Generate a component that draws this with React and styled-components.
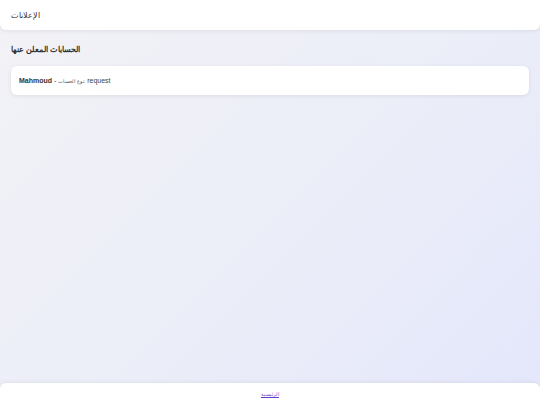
import React from "react";
import styled, { createGlobalStyle } from "styled-components";

const GlobalStyle = createGlobalStyle`
  html, body {
    margin: 0;
    padding: 0;
    height: 100%;
  }
  body {
    font-family: "Liberation Sans", "Noto Sans", Arial, sans-serif;
    background: linear-gradient(135deg, #f2f2f6 0%, #eceef8 50%, #e4e7fb 100%);
    color: #222;
  }
  #root {
    min-height: 100vh;
    display: flex;
    flex-direction: column;
  }
`;

const Header = styled.header`
  height: 30px;
  background: #fff;
  border-radius: 0 0 6px 6px;
  box-shadow: 0 1px 4px rgba(0, 0, 0, 0.08);
  display: flex;
  align-items: center;
  padding: 0 11px;
  font-size: 7.8px;
  color: #333;
`;

const Main = styled.main`
  flex: 1;
  padding: 12px 11px;
`;

const Title = styled.h2`
  margin: 3px 0 12px;
  font-size: 8px;
  font-weight: 700;
  color: #333;
`;

const Card = styled.div`
  background: #fff;
  border-radius: 6px;
  box-shadow: 0 1px 4px rgba(0, 0, 0, 0.08);
  height: 29px;
  padding: 0 8px;
  display: flex;
  align-items: center;
  gap: 2px;
  font-size: 7px;
  color: #444;
`;

const Name = styled.strong`
  color: #333;
`;

const Label = styled.span`
  font-size: 5px;
  color: #555;
`;

const Footer = styled.footer`
  height: 22px;
  background: #fff;
  border-radius: 6px 6px 0 0;
  box-shadow: 0 -1px 4px rgba(0, 0, 0, 0.06);
  display: flex;
  align-items: center;
  justify-content: center;
  font-size: 5px;
`;

const HomeLink = styled.a`
  color: #5a3fc8;
  text-decoration: underline;
`;

const accounts = [{ name: "Mahmoud", type: "request" }];

export default function App() {
  return (
    <>
      <GlobalStyle />
      <Header>الإعلانات</Header>
      <Main>
        <Title>الحسابات المعلن عنها</Title>
        {accounts.map((a) => (
          <Card key={a.name}>
            <Name>{a.name}</Name>
            <span>-</span>
            <Label>نوع الحساب:</Label>
            <span>{a.type}</span>
          </Card>
        ))}
      </Main>
      <Footer>
        <HomeLink href="#">الرئيسية</HomeLink>
      </Footer>
    </>
  );
}
